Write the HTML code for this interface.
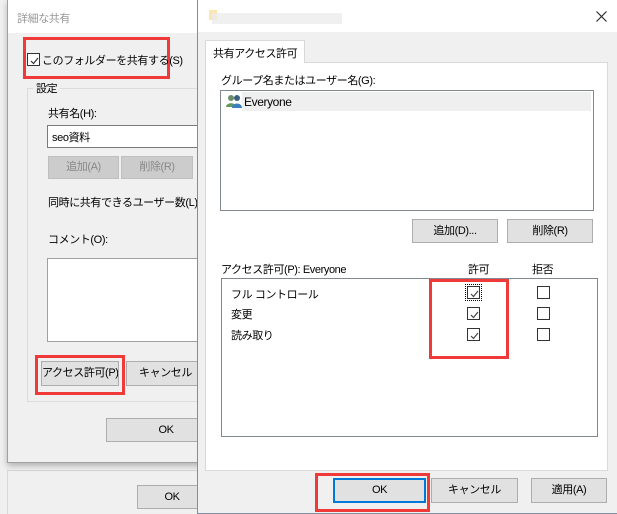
<!DOCTYPE html><html><head><meta charset="utf-8"><style>
*{box-sizing:border-box;margin:0;padding:0}
body{width:617px;height:514px;overflow:hidden;background:#f0f0f0;position:relative;font-family:"Liberation Sans","Noto Sans CJK JP",sans-serif;font-size:11px;letter-spacing:-0.4px;color:#000;white-space:nowrap}
.a{position:absolute}
.btn{position:absolute;background:#e1e1e1;border:1px solid #adadad;text-align:center;overflow:hidden}
.red{position:absolute;border:3px solid #f03a3a}
.cb{position:absolute;width:13px;height:13px;border:1px solid #333;background:#fff}
.cb svg{position:absolute;left:1px;top:1px}
</style></head><body>
<div class="a" style="left:7px;top:470px;width:200px;height:44px;border:1px solid #d8d8d8;border-bottom:none;background:#f0f0f0"></div>
<div class="btn" style="left:137px;top:485px;width:70px;height:24px;line-height:22px">OK</div>
<div class="a" style="left:7px;top:0;width:200px;height:463px;background:#f0f0f0;border:1px solid #a0a0a0;box-shadow:0 3px 6px rgba(0,0,0,.25)"></div>
<div class="a" style="left:8px;top:0;width:199px;height:33px;background:#fff"></div>
<div class="a" style="left:17px;top:10px;color:#999">詳細な共有</div>
<div class="red" style="left:23px;top:37px;width:147px;height:42px"></div>
<div class="cb" style="left:27px;top:53px"><svg width="11" height="11"><path d="M2 6l2.5 2.5L9 3" stroke="#333" fill="none" stroke-width="1.2"/></svg></div>
<div class="a" style="left:42px;top:52px">このフォルダーを共有する(S)</div>
<div class="a" style="left:27px;top:88px;width:190px;height:314px;border:1px solid #dcdcdc"></div>
<div class="a" style="left:33px;top:80px;background:#f0f0f0;padding:0 3px">設定</div>
<div class="a" style="left:48px;top:105px">共有名(H):</div>
<div class="a" style="left:47px;top:125px;width:160px;height:23px;background:#fff;border:1px solid #7a7a7a;padding:3px 4px">seo資料</div>
<div class="btn" style="left:48px;top:156px;width:71px;height:23px;line-height:21px;color:#888;background:#ccc;border-color:#bfbfbf">追加(A)</div>
<div class="btn" style="left:121px;top:156px;width:72px;height:23px;line-height:21px;color:#888;background:#ccc;border-color:#bfbfbf">削除(R)</div>
<div class="a" style="left:48px;top:194px">同時に共有できるユーザー数(L):</div>
<div class="a" style="left:48px;top:231px">コメント(O):</div>
<div class="a" style="left:47px;top:258px;width:160px;height:84px;background:#fff;border:1px solid #a0a0a0"></div>
<div class="btn" style="left:41px;top:361px;width:78px;height:25px;line-height:23px">アクセス許可(P)</div>
<div class="btn" style="left:126px;top:361px;width:80px;height:25px;line-height:23px;text-align:left;padding-left:12px">キャンセル</div>
<div class="red" style="left:35px;top:355px;width:90px;height:40px"></div>
<div class="btn" style="left:106px;top:418px;width:100px;height:24px;line-height:22px;padding-left:20px">OK</div>
<div class="a" style="left:197px;top:0;width:420px;height:514px;background:#f0f0f0;border:1px solid #7f8ea4;border-right:none"></div>
<div class="a" style="left:198px;top:0;width:419px;height:32px;background:#fff"></div>
<div class="a" style="left:209px;top:10px;width:8px;height:10px;background:#f6d77a;opacity:.6"></div>
<div class="a" style="left:212px;top:13px;width:130px;height:11px;background:#ececec;opacity:.8"></div>
<svg class="a" style="left:596px;top:11px" width="11" height="11"><path d="M0.5 0.5l10 10M10.5 0.5l-10 10" stroke="#222" stroke-width="1.1"/></svg>
<div class="a" style="left:205px;top:62px;width:403px;height:409px;background:#fff;border:1px solid #d9d9d9"></div>
<div class="a" style="left:205px;top:40px;width:100px;height:23px;background:#fff;border:1px solid #d9d9d9;border-bottom:none;padding:4px 0 0 7px">共有アクセス許可</div>
<div class="a" style="left:221px;top:72px">グループ名またはユーザー名(G):</div>
<div class="a" style="left:220px;top:90px;width:374px;height:121px;border:1px solid #828790;background:#fff"></div>
<div class="a" style="left:242px;top:92px;width:349px;height:19px;background:#efefef"></div>
<svg class="a" style="left:226px;top:94px" width="16" height="14"><circle cx="5" cy="4" r="3" fill="#6a8f6a"/><path d="M0 13c0-5 10-5 10 0z" fill="#5e9a5e"/><circle cx="11" cy="4" r="3" fill="#3f5f7f"/><path d="M6 14c0-6 10-6 10 0z" fill="#3c7fc0"/></svg>
<div class="a" style="left:244px;top:95px;font-size:12px">Everyone</div>
<div class="btn" style="left:412px;top:219px;width:86px;height:24px;line-height:22px">追加(D)...</div>
<div class="btn" style="left:507px;top:219px;width:86px;height:24px;line-height:22px">削除(R)</div>
<div class="a" style="left:221px;top:261px">アクセス許可(P): Everyone</div>
<div class="a" style="left:468px;top:261px">許可</div>
<div class="a" style="left:532px;top:261px">拒否</div>
<div class="a" style="left:221px;top:278px;width:377px;height:159px;border:1px solid #828790;background:#fff"></div>
<div class="a" style="left:231px;top:286px">フル コントロール</div>
<div class="a" style="left:231px;top:306px">変更</div>
<div class="a" style="left:231px;top:327px">読み取り</div>
<div class="a" style="left:465px;top:284px;width:17px;height:17px;border:1px dotted #000"></div>
<div class="cb" style="left:467px;top:286px"><svg width="11" height="11"><path d="M2 6l2.5 2.5L9 3" stroke="#444" fill="none" stroke-width="1.2"/></svg></div>
<div class="cb" style="left:467px;top:307px"><svg width="11" height="11"><path d="M2 6l2.5 2.5L9 3" stroke="#444" fill="none" stroke-width="1.2"/></svg></div>
<div class="cb" style="left:467px;top:328px"><svg width="11" height="11"><path d="M2 6l2.5 2.5L9 3" stroke="#444" fill="none" stroke-width="1.2"/></svg></div>
<div class="cb" style="left:537px;top:286px"></div>
<div class="cb" style="left:537px;top:307px"></div>
<div class="cb" style="left:537px;top:328px"></div>
<div class="red" style="left:429px;top:279px;width:80px;height:80px"></div>
<div class="btn" style="left:333px;top:478px;width:93px;height:25px;line-height:21px;border:2px solid #0078d7">OK</div>
<div class="btn" style="left:431px;top:478px;width:87px;height:25px;line-height:23px">キャンセル</div>
<div class="btn" style="left:531px;top:478px;width:76px;height:25px;line-height:23px">適用(A)</div>
<div class="red" style="left:315px;top:473px;width:115px;height:39px"></div>
</body></html>
